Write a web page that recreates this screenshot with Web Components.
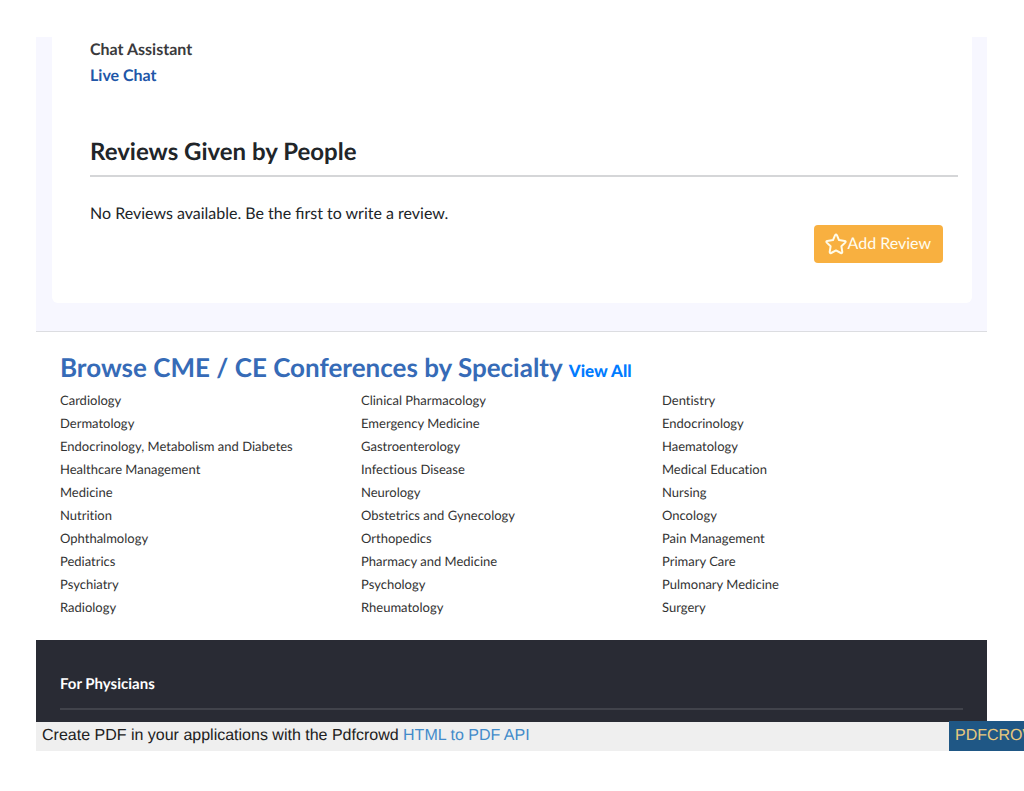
<!DOCTYPE html>
<html lang="en">
<head>
<meta charset="utf-8">
<meta name="viewport" content="width=device-width, initial-scale=1">
<title>CME Conferences</title>
<style>
html { overflow-x: hidden; }
body { margin: 0; background: #fff; color: #212529; font: 16px/26px Lato, sans-serif; text-rendering: geometricPrecision; overflow-x: hidden; }
</style>
</head>
<body>
<cme-page>
  <review-panel></review-panel>
  <specialty-list></specialty-list>
  <site-footer heading="For Physicians"></site-footer>
  <pdf-banner slot="banner"></pdf-banner>
</cme-page>
<script>
class BaseElement extends HTMLElement {
  constructor() {
    super();
    const root = this.attachShadow({ mode: 'open' });
    root.innerHTML = this.template();
  }
}

customElements.define('cme-page', class extends BaseElement {
  template() {
    return `<style>
      :host { display: block; padding: 37px 0 0 36px; }
      main { margin-right: 37px; }
    </style>
    <main><slot></slot></main>
    <slot name="banner"></slot>`;
  }
});

customElements.define('add-review-button', class extends BaseElement {
  template() {
    return `<style>
      :host { display: block; }
      button { display: flex; align-items: center; gap: 1px; height: 38px; padding: 0 12px 0 11px; border: 0; border-radius: 4px;
        background: #f8b040; color: #fffdf0; font: 16px/24px Lato, sans-serif; text-rendering: inherit; cursor: pointer; }
      svg { display: block; width: 22px; height: 22px; }
    </style>
    <button type="button">
      <svg viewBox="0 0 22 22" fill="none" stroke="#fffbe8" stroke-width="2" stroke-linejoin="round" aria-hidden="true">
        <path d="M10.1 2.2Q11 .8 11.9 2.2L14 7.1L19.8 7.9Q21.3 8.4 20.2 9.6L16.4 13.3L17.3 18.8Q17.3 20.6 15.8 20L11 17.4L6.2 20Q4.7 20.6 4.7 18.8L5.6 13.3L1.8 9.6Q.7 8.4 2.2 7.9L8 7.1Z"/>
      </svg>
      <slot></slot>
    </button>`;
  }
});

customElements.define('review-panel', class extends BaseElement {
  template() {
    return `<style>
      :host { display: block; background: #f7f7ff; padding: 0 15px 28px 16px; border-bottom: 1px solid #dcdde1; }
      section { background: #fff; border-radius: 0 0 6px 6px; padding: 0 14px 40px 38px; }
      h3 { margin: 0; font-size: 16px; line-height: 26px; font-weight: 700; color: #3a3a3c; }
      a { display: block; width: max-content; font-weight: 700; color: #2156a8; text-decoration: none; }
      h2 { margin: 47px 0 0; padding-bottom: 7px; border-bottom: 2px solid #d5d6d8; font-size: 24px; line-height: 32px; font-weight: 700; }
      p { margin: 26px 0 0; line-height: 22px; }
      .actions { display: flex; justify-content: flex-end; padding-right: 15px; }
    </style>
    <section>
      <h3>Chat Assistant</h3>
      <a href="#chat">Live Chat</a>
      <h2>Reviews Given by People</h2>
      <p>No Reviews available. Be the first to write a review.</p>
      <div class="actions"><add-review-button>Add Review</add-review-button></div>
    </section>`;
  }
});

customElements.define('specialty-list', class extends BaseElement {
  template() {
    const names = ['Cardiology', 'Clinical Pharmacology', 'Dentistry', 'Dermatology', 'Emergency Medicine', 'Endocrinology',
      'Endocrinology, Metabolism and Diabetes', 'Gastroenterology', 'Haematology', 'Healthcare Management', 'Infectious Disease', 'Medical Education',
      'Medicine', 'Neurology', 'Nursing', 'Nutrition', 'Obstetrics and Gynecology', 'Oncology', 'Ophthalmology', 'Orthopedics', 'Pain Management',
      'Pediatrics', 'Pharmacy and Medicine', 'Primary Care', 'Psychiatry', 'Psychology', 'Pulmonary Medicine', 'Radiology', 'Rheumatology', 'Surgery'];
    return `<style>
      :host { display: block; padding: 15px 24px 21px; font-variant-ligatures: none; }
      header { display: flex; align-items: baseline; gap: 6px; padding-bottom: 2px; }
      h2 { margin: 0; font-size: 26px; line-height: 40px; font-weight: 700; color: #366bb7; }
      header a { font-size: 17px; font-weight: 900; color: #007bff; text-decoration: none; }
      ul { display: grid; grid-template-columns: repeat(3, 1fr); margin: 0; padding: 0; list-style: none; }
      li { font-size: 13px; line-height: 23px; }
      li a { color: #333; text-decoration: none; }
    </style>
    <header><h2>Browse CME / CE Conferences by Specialty</h2><a href="#all">View All</a></header>
    <ul>${names.map(n => `<li><a href="#specialty">${n}</a></li>`).join('')}</ul>`;
  }
});

customElements.define('site-footer', class extends BaseElement {
  template() {
    return `<style>
      :host { display: block; background: #292b34; color: #fff; padding: 32px 24px 12px; }
      h4 { margin: 0; padding-bottom: 12px; border-bottom: 2px solid #41434b; font-size: 15px; line-height: 24px; font-weight: 700; }
    </style>
    <h4></h4>`;
  }
  connectedCallback() {
    this.shadowRoot.querySelector('h4').textContent = this.getAttribute('heading');
  }
});

customElements.define('pdf-banner', class extends BaseElement {
  template() {
    return `<style>
      :host { display: flex; font: 16px/28px "Liberation Sans", Arial, sans-serif; background: #efefef; }
      p { flex: 1; margin: 0; padding: 0 6px 1px; color: #212121; }
      p a { color: #428bca; text-decoration: none; }
      .brand { flex: 0 0 75px; box-sizing: border-box; padding: 1px 0 0 6px; white-space: nowrap; overflow: hidden; background: #1f5785; color: #e8c97e; text-decoration: none; margin-top: -1px; }
    </style>
    <p>Create PDF in your applications with the Pdfcrowd <a href="#api">HTML to PDF API</a></p>
    <a class="brand" href="#pdfcrowd">PDFCROWD</a>`;
  }
});
</script>
</body>
</html>
